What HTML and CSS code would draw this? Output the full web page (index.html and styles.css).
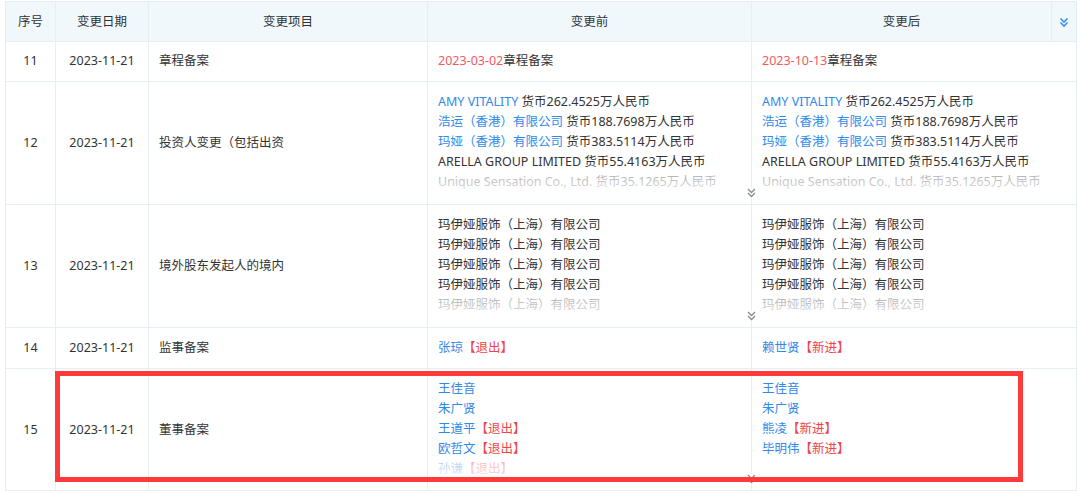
FILE: index.html
```html
<!DOCTYPE html>
<html lang="zh-CN">
<head>
<meta charset="utf-8">
<title>变更记录</title>
<link rel="stylesheet" href="styles.css">
</head>
<body>
<div class="wrap">
  <table class="tbl">
    <colgroup>
      <col class="c-no"><col class="c-date"><col class="c-item"><col class="c-before"><col class="c-after"><col class="c-tool">
    </colgroup>
    <thead>
      <tr>
        <th>序号</th>
        <th>变更日期</th>
        <th>变更项目</th>
        <th>变更前</th>
        <th>变更后</th>
        <th class="tool">
          <svg width="10" height="11" viewBox="0 0 10 11"><path d="M1.5 1.5l3.5 3.5 3.5-3.5M1.5 5.5l3.5 3.5 3.5-3.5" fill="none" stroke="#3b8fe8" stroke-width="1.6"/></svg>
        </th>
      </tr>
    </thead>
    <tbody>
      <tr class="short first">
        <td class="no">11</td>
        <td class="date">2023-11-21</td>
        <td class="item">章程备案</td>
        <td class="val"><span class="red-d">2023-03-02</span>章程备案</td>
        <td class="val" colspan="2"><span class="red-d">2023-10-13</span>章程备案</td>
      </tr>
      <tr>
        <td class="no">12</td>
        <td class="date">2023-11-21</td>
        <td class="item">投资人变更（包括出资</td>
        <td class="val top">
          <div class="lines fade">
            <div><span class="link">AMY VITALITY</span> 货币262.4525万人民币</div>
            <div><span class="link">浩运（香港）有限公司</span> 货币188.7698万人民币</div>
            <div><span class="link">玛娅（香港）有限公司</span> 货币383.5114万人民币</div>
            <div>ARELLA GROUP LIMITED 货币55.4163万人民币</div>
            <div>Unique Sensation Co., Ltd. 货币35.1265万人民币</div>
          </div>
          <svg class="more" width="9" height="10" viewBox="0 0 9 10"><path d="M1 1l3.5 3.5 3.5-3.5M1 5l3.5 3.5 3.5-3.5" fill="none" stroke="#8a8a8a" stroke-width="1.3"/></svg>
        </td>
        <td class="val top" colspan="2">
          <div class="lines fade">
            <div><span class="link">AMY VITALITY</span> 货币262.4525万人民币</div>
            <div><span class="link">浩运（香港）有限公司</span> 货币188.7698万人民币</div>
            <div><span class="link">玛娅（香港）有限公司</span> 货币383.5114万人民币</div>
            <div>ARELLA GROUP LIMITED 货币55.4163万人民币</div>
            <div>Unique Sensation Co., Ltd. 货币35.1265万人民币</div>
          </div>
        </td>
      </tr>
      <tr>
        <td class="no">13</td>
        <td class="date">2023-11-21</td>
        <td class="item">境外股东发起人的境内</td>
        <td class="val top">
          <div class="lines fade">
            <div>玛伊娅服饰（上海）有限公司</div>
            <div>玛伊娅服饰（上海）有限公司</div>
            <div>玛伊娅服饰（上海）有限公司</div>
            <div>玛伊娅服饰（上海）有限公司</div>
            <div>玛伊娅服饰（上海）有限公司</div>
          </div>
          <svg class="more" width="9" height="10" viewBox="0 0 9 10"><path d="M1 1l3.5 3.5 3.5-3.5M1 5l3.5 3.5 3.5-3.5" fill="none" stroke="#8a8a8a" stroke-width="1.3"/></svg>
        </td>
        <td class="val top" colspan="2">
          <div class="lines fade">
            <div>玛伊娅服饰（上海）有限公司</div>
            <div>玛伊娅服饰（上海）有限公司</div>
            <div>玛伊娅服饰（上海）有限公司</div>
            <div>玛伊娅服饰（上海）有限公司</div>
            <div>玛伊娅服饰（上海）有限公司</div>
          </div>
        </td>
      </tr>
      <tr class="short">
        <td class="no">14</td>
        <td class="date">2023-11-21</td>
        <td class="item">监事备案</td>
        <td class="val"><span class="link">张琼</span><span class="red">【退出】</span></td>
        <td class="val" colspan="2"><span class="link">赖世贤</span><span class="red">【新进】</span></td>
      </tr>
      <tr class="last">
        <td class="no">15</td>
        <td class="date">2023-11-21</td>
        <td class="item">董事备案</td>
        <td class="val top">
          <div class="lines fade">
            <div><span class="link">王佳音</span></div>
            <div><span class="link">朱广贤</span></div>
            <div><span class="link">王道平</span><span class="red">【退出】</span></div>
            <div><span class="link">欧哲文</span><span class="red">【退出】</span></div>
            <div><span class="link">孙谦</span><span class="red">【退出】</span></div>
          </div>
          <svg class="more" width="9" height="10" viewBox="0 0 9 10"><path d="M1 1l3.5 3.5 3.5-3.5M1 5l3.5 3.5 3.5-3.5" fill="none" stroke="#8a8a8a" stroke-width="1.3"/></svg>
        </td>
        <td class="val top" colspan="2">
          <div class="lines">
            <div><span class="link">王佳音</span></div>
            <div><span class="link">朱广贤</span></div>
            <div><span class="link">熊凌</span><span class="red">【新进】</span></div>
            <div><span class="link">毕明伟</span><span class="red">【新进】</span></div>
          </div>
        </td>
      </tr>
    </tbody>
  </table>
  <div class="mark"></div>
</div>
</body>
</html>
```

FILE: styles.css
```css
html, body {
  margin: 0;
  padding: 0;
  background: #ffffff;
}
body {
  font-family: "Noto Sans", "Noto Sans CJK SC", sans-serif;
  font-size: 12.5px;
  color: #333333;
}
.wrap {
  position: relative;
  padding: 1px 4px 0 5px;
}
.tbl {
  width: 1071px;
  border-collapse: collapse;
  table-layout: fixed;
}
.c-no { width: 50px; }
.c-date { width: 93px; }
.c-item { width: 279px; }
.c-before { width: 324px; }
.c-after { width: 300px; }
.c-tool { width: 25px; }

.tbl th {
  background: #f1f8fc;
  font-weight: normal;
  height: 39px;
  padding: 0;
  border: 1px solid #e3eef6;
  text-align: center;
  color: #333;
  line-height: 20px;
}
.tbl th.tool svg { display: block; margin: 1px auto 0; }
.tbl td {
  border: 1px solid #e6eff6;
  padding: 10px 10px;
  line-height: 20px;
  vertical-align: middle;
  white-space: nowrap;
}
.tbl tr.first td { padding-top: 9px; padding-bottom: 10px; }
.tbl td.no { text-align: center; padding-left: 0; padding-right: 0; }
.tbl td.date { text-align: center; padding-left: 0; padding-right: 0; }
.tbl td.val { position: relative; }
.tbl td.top { vertical-align: top; padding: 10px 10px 12px; }
.tbl tr.last td.top { padding-bottom: 11px; }

.lines { position: relative; height: 100px; overflow: hidden; }
.lines.fade::after {
  content: "";
  position: absolute;
  left: 0; right: 0; bottom: 0;
  height: 20px;
  background: linear-gradient(rgba(255,255,255,0.6), rgba(255,255,255,0.85));
}
.link { color: #3189ea; }
.red { color: #f0434a; }
.red-d { color: #f25a5f; }
.more {
  position: absolute;
  right: -5px;
  bottom: 6px;
  display: block;
  background: #fff;
}
.mark {
  position: absolute;
  left: 55px;
  top: 371px;
  width: 958px;
  height: 101px;
  border: 5px solid #fe3a3a;
  pointer-events: none;
}
```
